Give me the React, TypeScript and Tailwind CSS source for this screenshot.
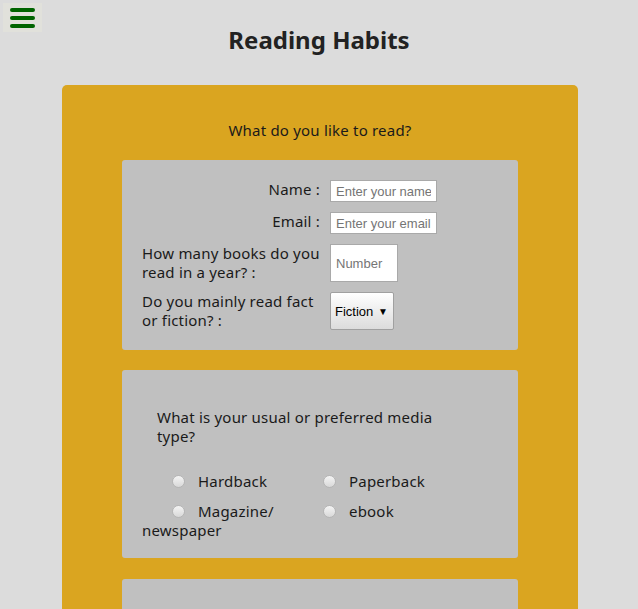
import React from 'react';

const font = { fontFamily: '"Noto Sans", Lato, sans-serif' };
const arial = { fontFamily: '"Liberation Sans", Arial, sans-serif' };

const Radio = () => (
  <span className="inline-block w-[13px] h-[13px] rounded-full border border-[#b5b5b5] bg-gradient-to-b from-[#f4f4f4] to-[#d8d8d8] align-[-1px] mr-[13px] indent-0" />
);

const FieldRow: React.FC<{ label: string; children: React.ReactNode }> = ({ label, children }) => (
  <div className="flex items-start gap-[10px]">
    <div className="w-[178px] flex justify-end shrink-0">
      <span className="text-left">{label}</span>
    </div>
    {children}
  </div>
);

const inputBase =
  'bg-white border border-[#a9a9a9] px-[5px] text-[13px] tracking-normal text-[#222] placeholder:text-[#757575] outline-none';

export default function App() {
  return (
    <div className="min-h-[609px] bg-[#dcdcdc] text-[#1a1a1a] relative tracking-[0.2px]" style={font}>
      {/* menu button */}
      <button className="absolute left-[3px] top-[3px] w-[39px] h-[29px] bg-[#e1e1db] flex flex-col items-center justify-center gap-[4px]">
        <span className="block w-[25px] h-[4px] rounded-full bg-[#006400]" />
        <span className="block w-[25px] h-[4px] rounded-full bg-[#006400]" />
        <span className="block w-[25px] h-[4px] rounded-full bg-[#006400]" />
      </button>

      <h1 className="text-center text-[24px] font-bold text-[#222] pt-[24px] leading-[32px] tracking-normal">Reading Habits</h1>

      <div className="w-[516px] ml-[62px] mt-[29px] bg-[#daa520] rounded-t-[5px] pt-[36px] px-[60px] pb-[20px]">
        <p className="text-center text-[15px] leading-[19px] mb-[20px]">What do you like to read?</p>

        {/* panel 1 */}
        <div className="bg-[#c0c0c0] rounded-[3px] pt-[20px] pb-[20px] pl-[20px] text-[15px] leading-[19px] flex flex-col gap-[10px]">
          <FieldRow label="Name :">
            <input className={`${inputBase} w-[107px] h-[22px]`} placeholder="Enter your name" style={arial} />
          </FieldRow>
          <FieldRow label="Email :">
            <input className={`${inputBase} w-[107px] h-[22px]`} placeholder="Enter your email" style={arial} />
          </FieldRow>
          <FieldRow label="How many books do you read in a year? :">
            <input className={`${inputBase} w-[68px] h-[38px]`} placeholder="Number" style={arial} />
          </FieldRow>
          <FieldRow label="Do you mainly read fact or fiction? :">
            <div
              className="w-[64px] h-[38px] border border-[#a0a0a0] rounded-[2px] bg-gradient-to-b from-[#ffffff] to-[#dcdcdc] flex items-center justify-between pl-[4px] pr-[5px] text-[13px] tracking-normal text-black"
              style={arial}
            >
              <span>Fiction</span>
              <span className="text-[10px]">▼</span>
            </div>
          </FieldRow>
        </div>

        {/* panel 2 */}
        <div className="mt-[20px] bg-[#c0c0c0] rounded-[3px] pt-[38px] pb-[18px] px-[20px] text-[15px] leading-[19px]">
          <p className="pl-[15px] w-[315px]">What is your usual or preferred media type?</p>
          <div className="mt-[26px] grid grid-cols-[181px_1fr] gap-y-[11px]">
            <p className="indent-[30px]">
              <Radio />
              Hardback
            </p>
            <p>
              <Radio />
              Paperback
            </p>
            <p className="indent-[30px]">
              <Radio />
              Magazine/ newspaper
            </p>
            <p>
              <Radio />
              ebook
            </p>
          </div>
        </div>

        {/* panel 3 */}
        <div className="mt-[21px] bg-[#c0c0c0] rounded-t-[3px] h-[60px]" />
      </div>
    </div>
  );
}
